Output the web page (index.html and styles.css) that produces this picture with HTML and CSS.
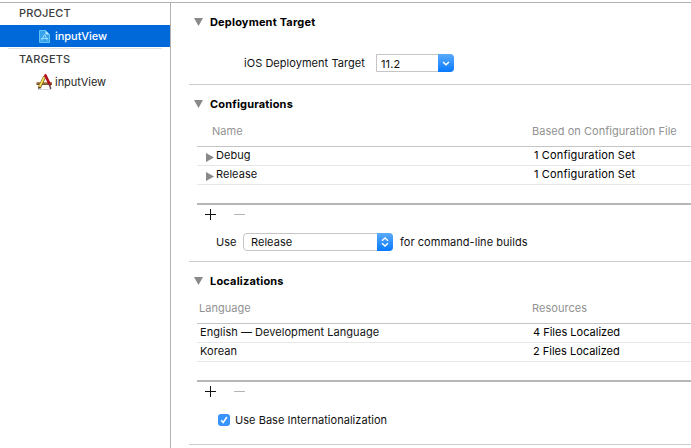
FILE: index.html
```html
<!DOCTYPE html>
<html lang="en">
<head>
<meta charset="utf-8">
<title>inputView</title>
<link rel="stylesheet" href="styles.css">
</head>
<body>
<div class="window">
  <nav class="sidebar">
    <div class="group project">PROJECT</div>
    <div class="item selected">
      <svg class="doc" width="11" height="13" viewBox="0 0 11 13"><path d="M.5.5h6l4 4v8H.5z" fill="#36a2ed" stroke="#62c3f8"/><path d="M6.500.5v4h4z" fill="#b5e5ff"/><path d="M5.500 4.500l-3 6M5.500 4.500l3 6M2 8.500h7" fill="none" stroke="#9adcff"/></svg>
      <span>inputView</span>
    </div>
    <div class="separator"></div>
    <div class="group">TARGETS</div>
    <div class="item target">
      <svg class="app" width="17" height="17" viewBox="0 0 17 17"><path d="M2 15.5h13" stroke="#ddd"/><path d="M.5 8.2h15.5v2.6H.5z" fill="#a7783e"/><path d="M.5 10.4H16M2 8.5v1M5 8.5v1M12 8.5v1M14 8.5v1" stroke="#604321" stroke-width=".8"/><path d="M8.8 2.5L3.2 14" stroke="#79551a" stroke-width="3"/><path d="M8.5 2.8L3.4 13.2" stroke="#f3e45b" stroke-width="1.8"/><path d="M8 2l1.8 1" stroke="#d05a52" stroke-width="2"/><path d="M2.200 15.500l.5-3 1.900 1z" fill="#4b3522"/><path d="M9.500 1.500l4.300 9" stroke="#b20e20" stroke-width="2.700" stroke-linecap="round"/><path d="M13.200 10l1.600 5" stroke="#6a4b43" stroke-width="1.500"/></svg>
      <span>inputView</span>
    </div>
  </nav>
  <main class="content">
    <section class="section deployment">
      <h2><svg class="disclosure" width="9" height="8"><path d="M0 0h9L4.5 8z"/></svg><span>Deployment Target</span></h2>
      <div class="target-row">
        <label>iOS Deployment Target</label>
        <div class="combo"><span>11.2</span><i><svg width="8" height="5" viewBox="0 0 8 5"><path d="M1 1l3 2.7L7 1"/></svg></i></div>
      </div>
    </section>
    <section class="section configurations">
      <h2><svg class="disclosure" width="9" height="8"><path d="M0 0h9L4.5 8z"/></svg><span>Configurations</span></h2>
      <div class="table">
        <div class="row head"><span class="name">Name</span><span class="based">Based on Configuration File</span></div>
        <div class="row"><svg class="disclosure" width="8" height="9"><path d="M0 0v9l8-4.500z"/></svg><span class="debug">Debug</span><b>1 Configuration Set</b></div>
        <div class="row"><svg class="disclosure" width="8" height="9"><path d="M0 0v9l8-4.500z"/></svg><span class="debug">Release</span><b>1 Configuration Set</b></div>
        <div class="row last"></div>
      </div>
      <div class="buttons"><svg width="36" height="11"><path class="plus" d="M0 5.500h11M5.500 0v11"/><path class="minus" d="M29 5.500h11"/></svg></div>
      <div class="use-row">
        <span class="use">Use</span>
        <div class="popup"><span>Release</span><i><svg width="8" height="10" viewBox="0 0 8 10"><path d="M1 3.700l3-2.700 3 2.700M1 6.300l3 2.700 3-2.700"/></svg></i></div>
        <span class="builds">for command-line builds</span>
      </div>
    </section>
    <section class="section localizations">
      <h2><svg class="disclosure" width="9" height="8"><path d="M0 0h9L4.5 8z"/></svg><span>Localizations</span></h2>
      <div class="table">
        <div class="row head"><span class="language">Language</span><span class="resources">Resources</span></div>
        <div class="row"><span class="english">English — Development Language</span><b class="files">4 Files Localized</b></div>
        <div class="row"><span class="english">Korean</span><b class="files">2 Files Localized</b></div>
        <div class="row last"></div>
      </div>
      <div class="buttons"><svg width="36" height="11"><path class="plus" d="M0 5.500h11M5.500 0v11"/><path class="minus" d="M29 5.500h11"/></svg></div>
      <div class="base-row"><i class="checkbox"><svg width="12" height="12"><path d="M3.200 6.300l2 2.200 3.700-5.500"/></svg></i><span>Use Base Internationalization</span></div>
    </section>
  </main>
</div>
</body>
</html>
```
FILE: styles.css
```css
* { box-sizing: border-box; }
body { margin: 0; width: 691px; height: 448px; overflow: hidden; background: #fff; color: #111; font: 11px/16px Inter, "Liberation Sans", sans-serif; letter-spacing: .04px; white-space: nowrap; }
svg { display: block; flex: none; overflow: visible; fill: none; }
i, b { font-style: normal; font-weight: inherit; }
.window { display: flex; height: 446px; margin-top: 2px; border-top: 1px solid #b1b1b1; }
.sidebar { width: 171px; flex: none; border-right: 1px solid #b1b1b1; color: #262626; }
.group { height: 21px; padding-left: 19px; line-height: 20px; font-weight: 500; color: #3c3c3c; letter-spacing: .13px; }
.project { height: 22px; line-height: 21px; }
.item { display: flex; align-items: center; height: 22px; padding-left: 36px; }
.selected { background: #0069da; color: #fff; font-weight: 500; }
.doc { margin: 0 5px 0 3px; }
.target { height: 24px; }
.app { margin-right: 2px; }
.item span { letter-spacing: -.03px; }
.separator { height: 1px; margin: 1px 8px 0; background: #e1e1e1; }
.content { width: 520px; }
.section { margin-left: 18px; padding-left: 8px; border-bottom: 1px solid #ccc; }
.deployment { height: 82px; }
.configurations { height: 177px; }
.localizations { height: 183px; }
h2 { display: flex; align-items: center; height: 38px; margin: 0; font: inherit; font-weight: 700; color: #000; letter-spacing: .18px; }
h2 .disclosure { margin-left: -3px; margin-right: 7px; }
.disclosure { fill: #898989; }
.target-row { display: flex; align-items: center; height: 20px; margin: 12px 0 0 47px; }
.target-row label { width: 132px; }
.combo, .popup { display: flex; border: 1px solid #c5c5c5; height: 18px; background: #fff; }
.combo { width: 78px; border-radius: 0 4px 4px 0; padding-left: 4px; }
.combo span { flex: 1; line-height: 18px; letter-spacing: .15px; }
.combo i, .popup i { display: flex; align-items: center; justify-content: center; width: 16px; height: 18px; margin: -1px -1px 0 0; border-radius: 0 4px 4px 0; background: linear-gradient(#5aaafa, #0879ff); }
.combo i svg, .popup i svg { stroke: #fff; stroke-width: 1.5; }
.row { display: flex; align-items: center; height: 19px; padding-bottom: 2px; border-bottom: 1px solid #e7e7e7; }
.head { height: 24px; border-color: #c5c5c5; color: #929292; padding-bottom: 7px; }
.row > span { width: 318px; }
.row .name { width: 335px; padding-left: 15px; }
.row .language { width: 335px; padding-left: 2px; }
.row > .disclosure { margin: 4px 2px 0 9px; }
.row .based, .row .resources { width: auto; }
.row b { color: #000; letter-spacing: .15px; }
.row .files { letter-spacing: 0; }
.row .english { padding-left: 3px; width: 336px; }
.row.last { height: 20px; border-bottom: 2px solid #b6b6b6; }
.buttons { height: 19px; padding: 4px 0 0 8px; }
.plus { stroke: #111; }
.minus { stroke: #b4b4b4; }
.use-row { display: flex; align-items: center; height: 18px; margin: 9px 0 0 19px; }
.use { width: 27px; }
.popup { width: 150px; border-radius: 4px; padding-left: 7px; margin-right: 7px; }
.popup span { flex: 1; line-height: 17px; }
.base-row { display: flex; align-items: center; height: 18px; margin: 10px 0 0 21px; }
.checkbox { width: 12px; height: 12px; margin-right: 5px; border-radius: 3px; background: #3893fa; }
.checkbox svg { stroke: #fff; stroke-width: 1.6; }
```
